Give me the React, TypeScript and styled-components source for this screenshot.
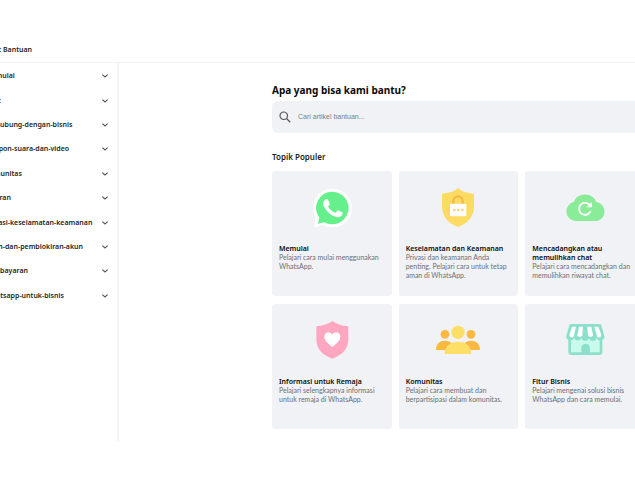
import React from 'react';
import styled, { createGlobalStyle } from 'styled-components';

const GlobalStyle = createGlobalStyle`
  * { box-sizing: border-box; }
  body {
    margin: 0;
    background: #fff;
    color: #1c1e21;
    font-family: "Noto Sans", "Open Sans", sans-serif;
    overflow: hidden;
  }
`;

const Viewport = styled.div`
  overflow: hidden;
  padding-top: 36px;
`;

const Page = styled.div`
  margin: 0 -10px 0 -20px;
`;

const Header = styled.header`
  display: flex;
  align-items: center;
  height: 27px;
  padding: 2px 0 0 2px;
  border-bottom: 1px solid #eff0f2;
`;

const Brand = styled.a`
  color: inherit;
  text-decoration: none;
  font-size: 7px;
  line-height: 10px;
  font-weight: 600;
`;

const Body = styled.div`
  display: flex;
`;

const Sidebar = styled.nav`
  flex: none;
  width: 139px;
  padding-top: 1px;
  border-right: 2px solid #f3f4f5;
`;

const TopicList = styled.ul`
  list-style: none;
  margin: 0;
  padding: 0;
  height: 244px;
  display: grid;
  grid-template-rows: repeat(10, 1fr);
`;

const TopicItem = styled.li`
  display: flex;
`;

const TopicButton = styled.button`
  flex: 1;
  display: flex;
  align-items: center;
  justify-content: space-between;
  border: 0;
  padding: 0 8px 0 5px;
  background: none;
  color: inherit;
  font: 600 7px/10px "Noto Sans", "Open Sans", sans-serif;
  white-space: nowrap;
  cursor: pointer;
`;

const Main = styled.main`
  flex: 1;
  min-width: 0;
  padding: 20px 0 12px 153px;
`;

const Title = styled.h1`
  margin: 0 0 4px;
  font-size: 10px;
  line-height: 14px;
  font-weight: 700;
  color: #0a0a0a;
`;

const SearchBox = styled.label`
  display: flex;
  align-items: center;
  gap: 7px;
  height: 32px;
  padding: 0 7px;
  border-radius: 6px;
  background: #f0f2f5;
`;

const SearchInput = styled.input`
  flex: 1;
  min-width: 0;
  border: 0;
  padding: 0;
  outline: 0;
  background: none;
  color: #1c1e21;
  font: 7px/10px "Liberation Sans", Arial, sans-serif;
  &::placeholder { color: #7b7f84; opacity: 1; }
`;

const SectionTitle = styled.h2`
  margin: 18px 0 8px;
  font-size: 8px;
  line-height: 12px;
  font-weight: 600;
`;

const CardGrid = styled.div`
  display: grid;
  grid-template-columns: repeat(3, 1fr);
  grid-auto-rows: 125px;
  gap: 8px 7px;
`;

const Card = styled.a`
  display: flex;
  flex-direction: column;
  padding: 16px 7px 0;
  border-radius: 3px;
  background: #f0f2f5;
  color: inherit;
  text-decoration: none;
`;

const CardIcon = styled.svg`
  flex: none;
  align-self: center;
  width: 48px;
  height: 40px;
  margin-bottom: 17px;
`;

const CardTitle = styled.h3`
  margin: 0;
  font-size: 7px;
  line-height: 9px;
  font-weight: 600;
  color: #0a0a0a;
`;

const CardText = styled.p`
  margin: 0;
  font-family: Lato, "Noto Sans", sans-serif;
  font-size: 7px;
  line-height: 9px;
  color: #6b6f74;
`;

const Chevron = () => (
  <svg width="8" height="8" viewBox="0 0 24 24" fill="none" stroke="#54585d" strokeWidth="3.4" aria-hidden="true">
    <path d="M4 8l8 7 8-7" />
  </svg>
);

const SearchIcon = () => (
  <svg width="12" height="12" viewBox="0 0 24 24" fill="none" stroke="#54585d" strokeWidth="2.4" aria-hidden="true">
    <circle cx="9.5" cy="9.5" r="7.5" />
    <path d="M15 15l7.5 7.5" />
  </svg>
);

const SHIELD = 'M72 4C62 13 44 19 24 20V58C24 90 44 110 72 120C100 110 120 90 120 58V20C100 19 82 13 72 4Z';

const ChatArt = () => (
  <>
    <path fill="#fff" d="M73 5a58 58 0 1 1-27 109L19 121 23 92A58 58 0 0 1 73 5Z" />
    <path fill="#66f08c" d="M73 14a49 49 0 1 1-24 92L30 110 34 92A49 49 0 0 1 73 14Z" />
    <path
      fill="#fff"
      transform="translate(17 6) scale(4.8)"
      d="M17.472 14.382c-.297-.149-1.758-.867-2.03-.967-.273-.099-.471-.148-.67.15-.197.297-.767.966-.94 1.164-.173.199-.347.223-.644.075-.297-.15-1.255-.463-2.39-1.475-.883-.788-1.48-1.761-1.653-2.059-.173-.297-.018-.458.13-.606.134-.133.298-.347.446-.52.149-.174.198-.298.298-.497.099-.198.05-.371-.025-.52-.075-.149-.669-1.612-.916-2.207-.242-.579-.487-.5-.669-.51-.173-.008-.371-.01-.57-.01-.198 0-.52.074-.792.372-.272.297-1.04 1.016-1.04 2.479 0 1.462 1.065 2.875 1.213 3.074.149.198 2.096 3.2 5.077 4.487.709.306 1.262.489 1.694.625.712.227 1.36.195 1.871.118.571-.085 1.758-.719 2.006-1.413.248-.694.248-1.289.173-1.413-.074-.124-.272-.198-.57-.347"
    />
  </>
);

const LockShieldArt = () => (
  <>
    <path fill="#fbdb62" d={SHIELD} />
    <path fill="none" stroke="#f6b944" strokeWidth="7" d="M58 54V42a14 14 0 0 1 28 0V54" />
    <rect x="48" y="50" width="49" height="38" rx="4" fill="#fff" />
    <g fill="#f6d27a">
      <circle cx="61" cy="69" r="4" />
      <circle cx="73" cy="69" r="4" />
      <circle cx="85" cy="69" r="4" />
    </g>
  </>
);

const CloudArt = () => (
  <>
    <path fill="#8aec98" d="M42 102A29 29 0 0 1 38 45A37 37 0 0 1 106 45A29 29 0 0 1 108 102Z" />
    <path fill="none" stroke="#f4fbf5" strokeWidth="6" d="M86 54A18 18 0 1 0 89 72" />
    <path fill="#f4fbf5" d="M93 44V61H76Z" />
  </>
);

const HeartShieldArt = () => (
  <>
    <path fill="#ffa6c1" d="M73 3C62 12 44 17 25 19V58C25 88 45 106 73 116C101 106 121 88 121 58V19C102 17 84 12 73 3Z" />
    <path fill="#fff" d="M73 81C60 70 49 62 49 50C49 36 66 32 73 44C80 32 97 36 97 50C97 62 86 70 73 81Z" />
  </>
);

const PeopleArt = () => (
  <>
    <g fill="#f9b941">
      <circle cx="33" cy="43" r="13" />
      <circle cx="111" cy="43" r="13" />
      <path d="M6 90C6 71 18 62 33 62C43 62 52 66 56 74V90Z" />
      <path d="M138 90C138 71 126 62 111 62C101 62 92 66 88 74V90Z" />
    </g>
    <g fill="#fddf68">
      <circle cx="72" cy="37" r="20" />
      <path d="M32 102C32 76 50 65 72 65C94 65 112 76 112 102Z" />
    </g>
  </>
);

const StoreArt = () => (
  <>
    <rect x="26" y="40" width="94" height="61" rx="5" fill="#c9fbec" stroke="#8ce0cb" strokeWidth="8" />
    <path fill="#8ce0cb" d="M61 102V84a13 13 0 0 1 26 0V102Z" />
    <path
      fill="#8ce0cb"
      d="M30 12H115Q120 12 121 16L129 44a12 12 0 0 1-22 10a12 12 0 0 1-23 0a12 12 0 0 1-23 0a12 12 0 0 1-22 0a12 12 0 0 1-22-10L25 16Q26 12 30 12Z"
    />
    <g fill="#fff">
      <path d="M33 20H45L39 46a7 7 0 0 1-14-1Z" />
      <path d="M54 20H66L64 46a8 8 0 0 1-15 0Z" />
      <path d="M79 20H91L96 46a8 8 0 0 1-15 0Z" />
      <path d="M100 20H112L121 45a7 7 0 0 1-14 1Z" />
    </g>
  </>
);

const topics = [
  'Memulai',
  'Chat',
  'Terhubung-dengan-bisnis',
  'Telepon-suara-dan-video',
  'Komunitas',
  'Saluran',
  'Privasi-keselamatan-keamanan',
  'Akun-dan-pemblokiran-akun',
  'Pembayaran',
  'Whatsapp-untuk-bisnis',
];

const cards = [
  { title: 'Memulai', text: 'Pelajari cara mulai menggunakan WhatsApp.', Art: ChatArt },
  {
    title: 'Keselamatan dan Keamanan',
    text: 'Privasi dan keamanan Anda penting. Pelajari cara untuk tetap aman di WhatsApp.',
    Art: LockShieldArt,
  },
  {
    title: 'Mencadangkan atau memulihkan chat',
    text: 'Pelajari cara mencadangkan dan memulihkan riwayat chat.',
    Art: CloudArt,
  },
  {
    title: 'Informasi untuk Remaja',
    text: 'Pelajari selengkapnya informasi untuk remaja di WhatsApp.',
    Art: HeartShieldArt,
  },
  { title: 'Komunitas', text: 'Pelajari cara membuat dan berpartisipasi dalam komunitas.', Art: PeopleArt },
  { title: 'Fitur Bisnis', text: 'Pelajari mengenai solusi bisnis WhatsApp dan cara memulai.', Art: StoreArt },
];

export default function App() {
  return (
    <Viewport>
      <GlobalStyle />
      <Page>
        <Header>
          <Brand href="#">Pusat Bantuan</Brand>
        </Header>
        <Body>
          <Sidebar>
            <TopicList>
              {topics.map((topic) => (
                <TopicItem key={topic}>
                  <TopicButton type="button" aria-expanded={false}>
                    {topic}
                    <Chevron />
                  </TopicButton>
                </TopicItem>
              ))}
            </TopicList>
          </Sidebar>
          <Main>
            <Title>Apa yang bisa kami bantu?</Title>
            <SearchBox>
              <SearchIcon />
              <SearchInput type="search" placeholder="Cari artikel bantuan..." aria-label="Cari artikel bantuan" />
            </SearchBox>
            <SectionTitle>Topik Populer</SectionTitle>
            <CardGrid>
              {cards.map(({ title, text, Art }) => (
                <Card key={title} href="#">
                  <CardIcon viewBox="0 0 144 120" aria-hidden="true">
                    <Art />
                  </CardIcon>
                  <CardTitle>{title}</CardTitle>
                  <CardText>{text}</CardText>
                </Card>
              ))}
            </CardGrid>
          </Main>
        </Body>
      </Page>
    </Viewport>
  );
}
